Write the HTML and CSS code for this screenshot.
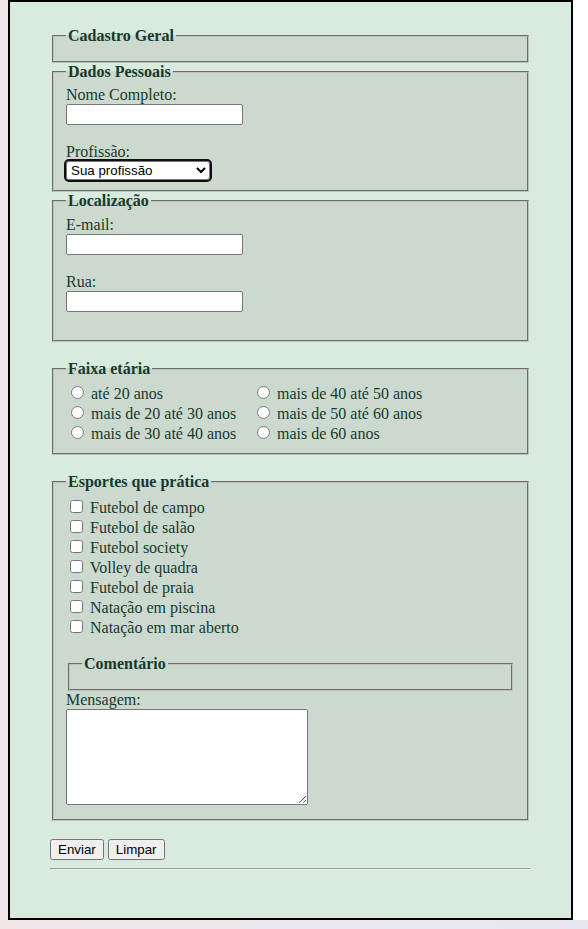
FILE: index.html
```html
<!DOCTYPE html>
<html lang="pt-BR">
<head>
<meta charset="utf-8">
<title>Cadastro Geral</title>
<link rel="stylesheet" href="styles.css">
</head>
<body>
<div class="page">
  <form class="form">
    <fieldset class="box"><legend>Cadastro Geral</legend></fieldset>
    <fieldset class="box">
      <legend>Dados Pessoais</legend>
      <label for="nome">Nome Completo:</label><br>
      <input id="nome" class="field" type="text"><br><br>
      <label for="prof">Profissão:</label><br>
      <select id="prof" class="select"><option>Sua profissão</option><option>Estudante</option><option>Professor</option></select>
    </fieldset>
    <fieldset class="box">
      <legend>Localização</legend>
      <label for="email">E-mail:</label><br>
      <input id="email" class="field" type="text"><br><br>
      <label for="rua">Rua:</label><br>
      <input id="rua" class="field" type="text"><br><br>
    </fieldset>
    <fieldset class="box spaced">
      <legend>Faixa etária</legend>
      <div class="ages">
        <label class="opt"><input type="radio" name="idade"> até 20 anos</label>
        <label class="opt"><input type="radio" name="idade"> mais de 40 até 50 anos</label>
        <label class="opt"><input type="radio" name="idade"> mais de 20 até 30 anos</label>
        <label class="opt"><input type="radio" name="idade"> mais de 50 até 60 anos</label>
        <label class="opt"><input type="radio" name="idade"> mais de 30 até 40 anos</label>
        <label class="opt"><input type="radio" name="idade"> mais de 60 anos</label>
      </div>
    </fieldset>
    <fieldset class="box spaced">
      <legend>Esportes que prática</legend>
      <label class="opt"><input type="checkbox"> Futebol de campo</label>
      <label class="opt"><input type="checkbox"> Futebol de salão</label>
      <label class="opt"><input type="checkbox"> Futebol society</label>
      <label class="opt"><input type="checkbox"> Volley de quadra</label>
      <label class="opt"><input type="checkbox"> Futebol de praia</label>
      <label class="opt"><input type="checkbox"> Natação em piscina</label>
      <label class="opt"><input type="checkbox"> Natação em mar aberto</label>
      <fieldset class="box sub"><legend>Comentário</legend></fieldset>
      <label class="opt" for="msg">Mensagem:</label>
      <div class="msg-wrap"><textarea id="msg" class="message"></textarea></div>
    </fieldset>
    <div class="actions">
      <button type="submit" class="btn">Enviar</button>
      <button type="reset" class="btn">Limpar</button>
    </div>
    <hr class="rule">
  </form>
</div>
</body>
</html>
```

FILE: styles.css
```css
html {
  background: linear-gradient(90deg, #f1e5e7 0%, #ebe7ee 50%, #e7e7ef 100%);
  min-height: 100%;
}

body {
  margin: 0 0 10px 8px;
  background: #ffffff;
  font-family: "Liberation Serif", "Times New Roman", serif;
  font-size: 16px;
  color: #163a2d;
}

.page {
  width: 481px;
  border: 2px solid #000000;
  background: #d9eadf;
  padding: 25px 40px 40px;
}

.form {
  margin: 0;
}

.box {
  background: #ccd9cf;
  margin: 0 2px;
  border: 2px groove #c0c0c0;
  padding: 0.35em 0.75em 0.625em;
}

.box legend {
  font-weight: bold;
  padding: 0 2px;
}

.spaced {
  margin-top: 18px;
}

.field {
  box-sizing: border-box;
  width: 177px;
  height: 21px;
  font-family: "Liberation Sans", Arial, sans-serif;
  font-size: 13.33px;
}

.select {
  box-sizing: border-box;
  width: 144px;
  height: 19px;
  font-family: "Liberation Sans", Arial, sans-serif;
  font-size: 13.33px;
  color: #000;
  background: #fff;
  border: 1px solid #767676;
  outline: 2px solid #101010;
  outline-offset: 0;
  border-radius: 3px;
}

.ages {
  display: grid;
  grid-template-columns: 186px auto;
}

.opt {
  display: block;
}

.sub {
  margin: 18px 2px 0;
}

.msg-wrap {
  padding-bottom: 0;
}

.message {
  box-sizing: border-box;
  width: 242px;
  height: 96px;
}

.actions {
  margin-top: 18px;
}

.btn {
  font-family: "Liberation Sans", Arial, sans-serif;
  font-size: 13.33px;
}

.rule {
  margin: 8px 0;
}
```
